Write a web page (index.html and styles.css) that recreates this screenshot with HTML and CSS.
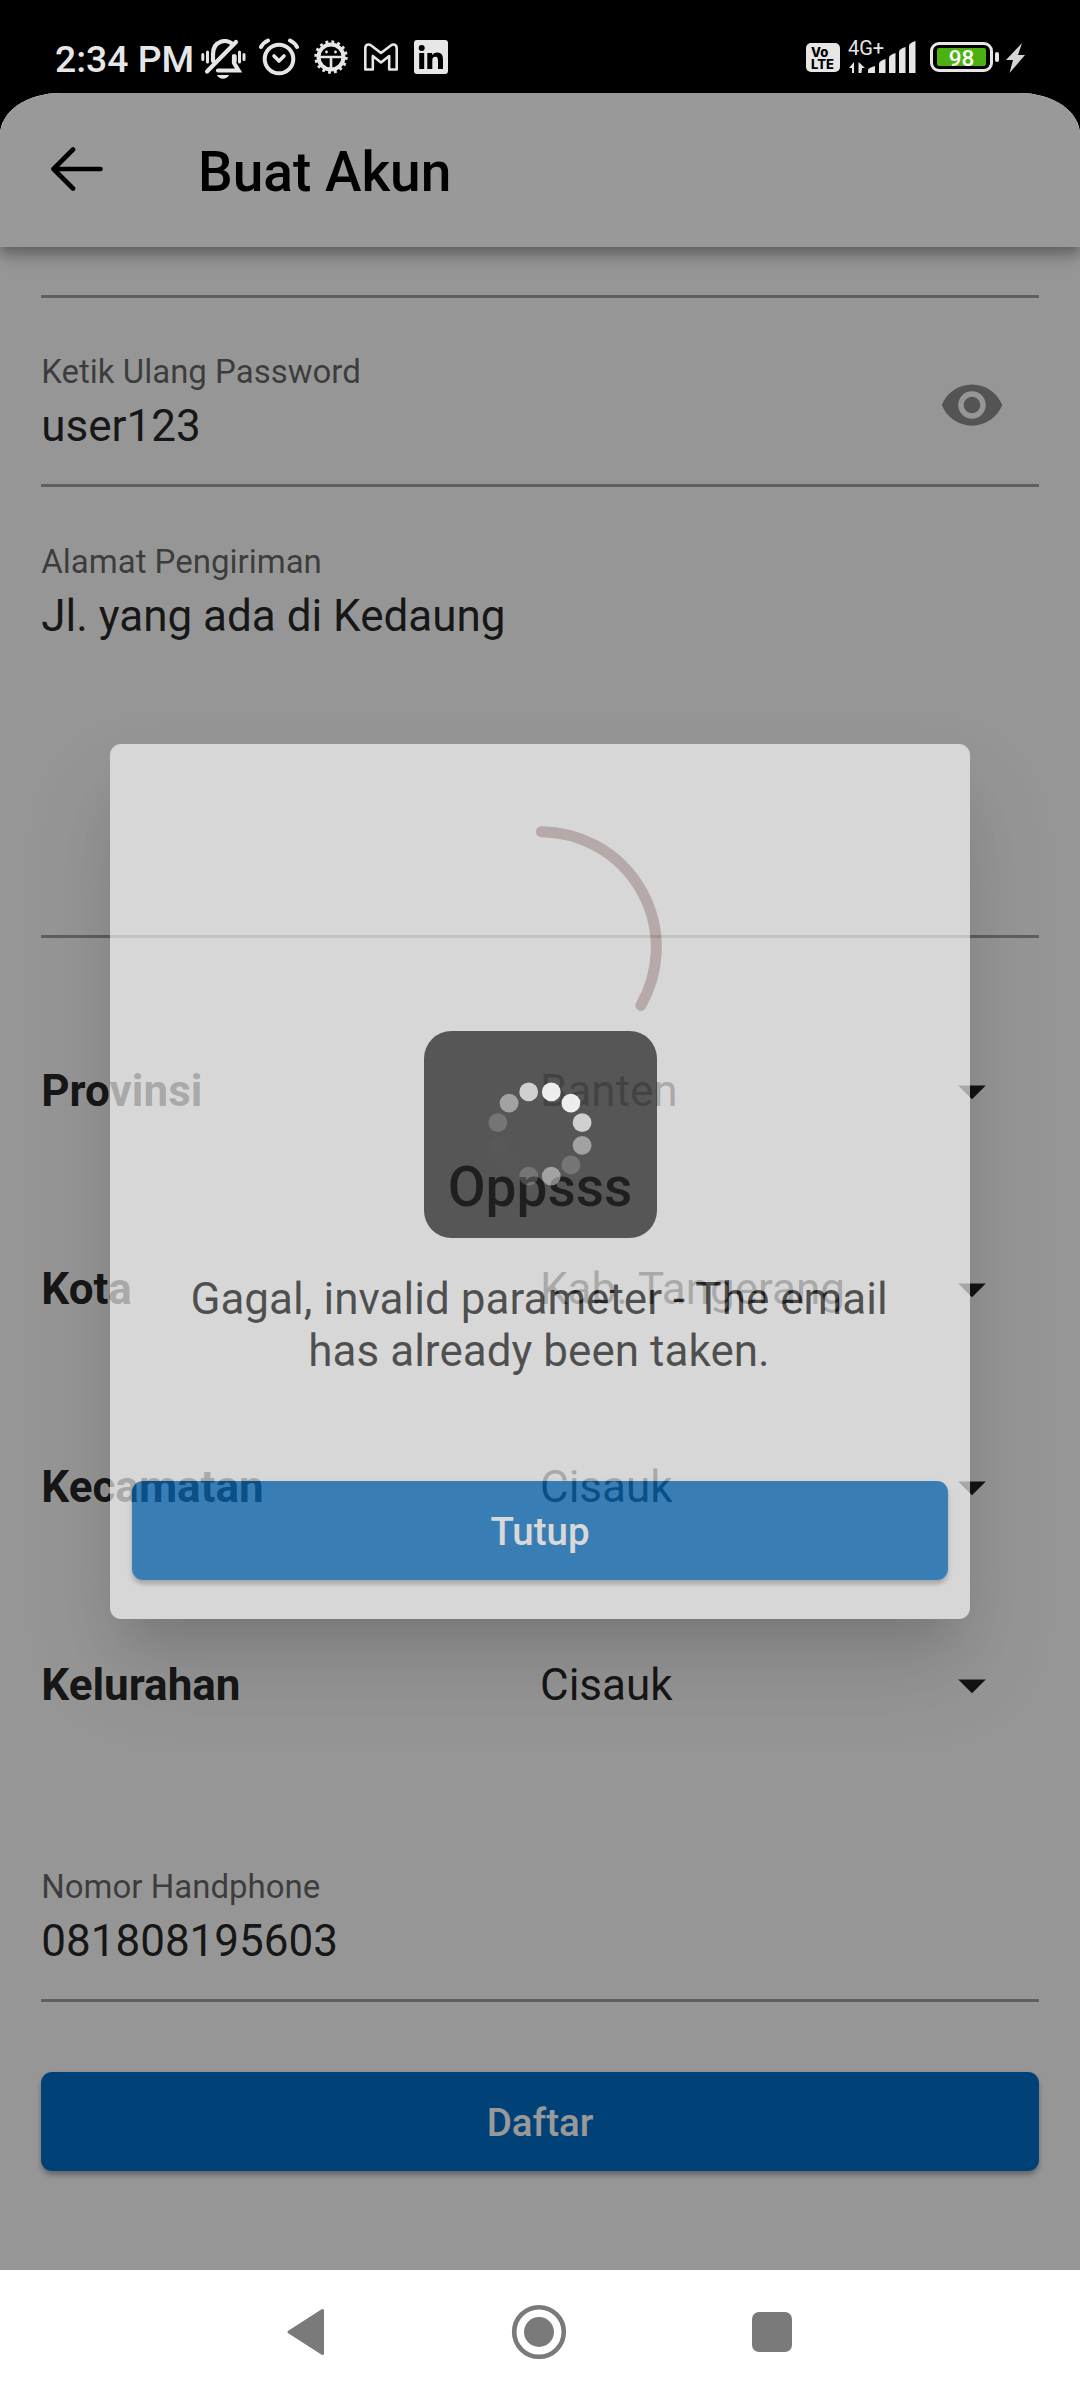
FILE: index.html
```html
<!DOCTYPE html>
<html lang="id">
<head>
<meta charset="utf-8">
<title>Buat Akun</title>
<link rel="stylesheet" href="styles.css">
</head>
<body>
<div class="screen">
  <div class="status">
    <span class="clock">2:34 PM</span>
    <div class="notifs">
      <svg class="bell" width="46" height="42" viewBox="0 0 46 42" fill="none" stroke="#e6e6e6" stroke-width="4.200" stroke-linecap="round">
        <path d="M1.800 15.500v5M6.500 13v10M43 15.500v5M38.500 13v10M34.200 17v5" stroke-width="3"/>
        <path d="M12 22v-7c0-13.500 14-16 20-9.500" />
        <path d="M33 17v7l4.500 7.500H17"/>
        <path d="M6 32.500L35 3"/>
        <path d="M16 36h12c-2 5-10 5-12 0z" fill="#e6e6e6" stroke="none"/>
      </svg>
      <svg class="alarm" width="40" height="38" viewBox="0 0 40 38" fill="none" stroke="#e6e6e6" stroke-width="4">
        <circle cx="20" cy="21" r="14.300"/>
        <path d="M2 9Q4.500 4.500 9 2.500M38 9Q35.500 4.500 31 2.500" stroke-linecap="round" stroke-width="4"/>
        <path d="M15 18l5 5 5-5" stroke-linecap="round" stroke-linejoin="round" stroke-width="3.600"/>
      </svg>
      <svg class="gear" width="34" height="36" viewBox="0 0 34 36" fill="none" stroke="#e6e6e6">
        <circle cx="17" cy="18" r="12.500" stroke-width="4"/>
        <circle cx="17" cy="18" r="15.200" stroke-width="3" stroke-dasharray="2.800 3.167"/>
        <path d="M5 18h24M17 19v11" stroke-width="2.600"/>
        <circle cx="12.500" cy="13" r="1.400" fill="#e6e6e6" stroke="none"/>
        <circle cx="21.500" cy="13" r="1.400" fill="#e6e6e6" stroke="none"/>
      </svg>
      <svg class="gmail" width="34" height="28" viewBox="0 0 34 28" fill="none" stroke="#e6e6e6" stroke-width="2.600" stroke-linejoin="round">
        <path d="M1.300 5.500C1.300 1.500 4.500 0.500 7.500 2.700L17 10l9.500-7.300C29.500 0.500 32.700 1.500 32.700 5.500V26.500H25.200V13L17 19.500 8.800 13V26.500H1.300z"/>
      </svg>
      <svg class="linkedin" width="34" height="34" viewBox="0 0 34 34">
        <rect width="34" height="34" rx="3" fill="#e6e6e6"/>
        <circle cx="7.700" cy="8" r="3" fill="#000"/>
        <path d="M5.200 13h5v16h-5zM13.300 13h4.800v2.200c1-1.700 2.800-2.600 5-2.600 4.700 0 5.900 3 5.900 7.200V29h-5v-8.200c0-2-.3-4-2.700-4s-3 2-3 4V29h-5z" fill="#000"/>
      </svg>
    </div>
    <div class="system">
      <div class="volte"><span>Vo</span><span>LTE</span></div>
      <div class="signal">
        <span class="net">4G+</span>
        <svg width="70" height="33" viewBox="0 0 70 33" fill="#e6e6e6">
          <path d="M1 27l5-6v11H4v-5zM10.500 21l6.500 6h-3l-.5 5h-3z"/>
          <path d="M20 29q0-2 7-4v7h-7zM31 23q0-3 6.500-5v14H31zM41 17q0-3 6.500-5v20H41zM51 11q0-3 6.500-5v26H51zM61 5q0-3 6.500-5v32H61z"/>
        </svg>
      </div>
      <div class="battery"><span class="level">98</span></div>
      <i class="cap"></i>
      <svg class="bolt" width="19" height="30" viewBox="0 0 19 30"><path d="M16 0L0 17h7L3.500 30 19 12h-7z" fill="#d4d4d4"/></svg>
    </div>
  </div>

  <div class="app">
    <header class="bar">
      <svg width="52" height="44" viewBox="0 0 52 44" fill="none" stroke="#000" stroke-width="4.600" stroke-linecap="round" stroke-linejoin="round"><path d="M22 2.500L2.500 22 22 41.500M3 22h46.500"/></svg>
      <h1>Buat Akun</h1>
    </header>
    <main class="form">
      <div class="field first"></div>
      <div class="field password">
        <label>Ketik Ulang Password</label>
        <div class="value">user123</div>
        <svg class="eye" width="66" height="66" viewBox="0 0 24 24"><path fill="#8c8c8c" d="M12 4.500C7 4.500 2.730 7.610 1 12c1.730 4.390 6 7.500 11 7.500s9.270-3.110 11-7.500c-1.730-4.390-6-7.500-11-7.500zM12 17c-2.760 0-5-2.240-5-5s2.240-5 5-5 5 2.240 5 5-2.240 5-5 5zm0-8c-1.660 0-3 1.340-3 3s1.340 3 3 3 3-1.340 3-3-1.340-3-3-3z"/></svg>
      </div>
      <div class="field area">
        <label>Alamat Pengiriman</label>
        <div class="value">Jl. yang ada di Kedaung</div>
      </div>
      <div class="selects">
        <div class="row"><b>Provinsi</b><span>Banten</span><svg width="66" height="66" viewBox="0 0 24 24"><path d="M7 10l5 5 5-5z"/></svg></div>
        <div class="row"><b>Kota</b><span>Kab. Tangerang</span><svg width="66" height="66" viewBox="0 0 24 24"><path d="M7 10l5 5 5-5z"/></svg></div>
        <div class="row"><b>Kecamatan</b><span>Cisauk</span><svg width="66" height="66" viewBox="0 0 24 24"><path d="M7 10l5 5 5-5z"/></svg></div>
        <div class="row"><b>Kelurahan</b><span>Cisauk</span><svg width="66" height="66" viewBox="0 0 24 24"><path d="M7 10l5 5 5-5z"/></svg></div>
      </div>
      <div class="field phone">
        <label>Nomor Handphone</label>
        <div class="value">081808195603</div>
      </div>
      <button class="btn submit">Daftar</button>
    </main>
    <div class="scrim">
      <section class="dialog">
        <svg class="anim" width="275" height="275" viewBox="-137.500 -137.500 275 275" fill="none"><path d="M1 -115.800A115.800 115.800 0 0 1 100.300 57.900" stroke="#c8b5b5" stroke-width="11" stroke-linecap="round"/></svg>
        <h2>Oppsss</h2>
        <p>Gagal, invalid parameter - The email has already been taken.</p>
        <button class="btn close">Tutup</button>
      </section>
    </div>
  </div>

  <div class="loader">
    <svg width="110" height="110" viewBox="-55 -55 110 110" fill="#fff">
      <circle cx="11.300" cy="-42.100" r="9.400" opacity=".9"/>
      <circle cx="30.900" cy="-30.900" r="9.400" opacity=".9"/>
      <circle cx="42.100" cy="-11.300" r="9.400" opacity=".72"/>
      <circle cx="42.100" cy="11.300" r="9.400" opacity=".45"/>
      <circle cx="30.900" cy="30.900" r="9.400" opacity=".19"/>
      <circle cx="11.300" cy="42.100" r="9.400" opacity=".45"/>
      <circle cx="-11.300" cy="42.100" r="9.400" opacity=".19"/>
      <circle cx="-30.900" cy="30.900" r="9.400" opacity=".01"/>
      <circle cx="-42.100" cy="11.300" r="9.400" opacity=".015"/>
      <circle cx="-42.100" cy="-11.300" r="9.400" opacity=".19"/>
      <circle cx="-30.900" cy="-30.900" r="9.400" opacity=".45"/>
      <circle cx="-11.300" cy="-42.100" r="9.400" opacity=".72"/>
    </svg>
  </div>

  <nav class="nav">
    <svg width="40" height="50" viewBox="0 0 40 50"><path d="M36.500 3.500v43L3 25z" fill="#7a7a7a" stroke="#7a7a7a" stroke-width="3" stroke-linejoin="round"/></svg>
    <svg width="56" height="56" viewBox="0 0 56 56"><circle cx="28" cy="28" r="24.800" fill="none" stroke="#7a7a7a" stroke-width="4.600"/><circle cx="28" cy="28" r="15" fill="#7a7a7a"/></svg>
    <svg width="40" height="40" viewBox="0 0 40 40"><rect width="40" height="40" rx="7" fill="#7a7a7a"/></svg>
  </nav>
</div>
</body>
</html>
```
FILE: styles.css
```css
* { box-sizing: border-box; }
body { margin: 0; font-family: Roboto, "Liberation Sans", sans-serif; background: #000; }
svg { display: block; flex: none; }
h1, h2, p { margin: 0; }
.screen { position: relative; width: 1080px; height: 2400px; display: flex; flex-direction: column; overflow: hidden; }

/* status bar */
.status { height: 93px; flex: none; display: flex; align-items: flex-start; padding: 0 55px; color: #e6e6e6; }
.clock { font-size: 37.300px; font-weight: 500; line-height: 46px; margin-top: 36px; width: 146px; white-space: nowrap; }
.notifs { display: flex; }
.bell { margin-top: 39px; }
.alarm { margin: 38px 0 0 12px; }
.gear { margin: 39px 0 0 15px; }
.gmail { margin: 43px 0 0 16px; }
.linkedin { margin: 40px 0 0 16px; }
.system { display: flex; margin-left: auto; }
.volte { width: 34px; height: 29px; margin-top: 43px; background: #e6e6e6; color: #000; border-radius: 5px; display: flex; flex-direction: column; padding: 3px 0 0 5px; font: 800 13px/12px Inter, Roboto, sans-serif; }
.signal { width: 70px; margin: 39px 0 0 8px; height: 34px; position: relative; }
.signal svg { position: absolute; left: 0; top: 2px; }
.net { position: absolute; left: 0; top: -2px; font-size: 20px; line-height: 22px; }
.battery { width: 63px; height: 30px; margin: 42px 0 0 12px; border: 3px solid #e6e6e6; border-radius: 9px; padding: 3px 4px; }
.level { display: block; height: 18px; background: #4db012; color: #fff; font-size: 22.500px; line-height: 20px; font-weight: 500; text-align: center; border-radius: 2px; }
.cap { width: 4px; height: 10px; background: #e6e6e6; border-radius: 2px; margin: 52px 0 0 2px; }
.bolt { margin: 43px 0 0 7px; }

/* page */
.app { position: relative; flex: 1; display: flex; flex-direction: column; background: #fafafa; border-radius: 60px 60px 0 0 / 42px 42px 0 0; overflow: hidden; }
.bar { height: 154px; flex: none; background: #fff; display: flex; align-items: center; padding: 0 51px; gap: 95px; box-shadow: 0 5px 11px rgba(0,0,0,.2), 0 11px 14px rgba(0,0,0,.14), 0 3px 27px rgba(0,0,0,.1); z-index: 1; }
.bar svg { margin-top: -2px; }
.bar h1 { font-size: 55px; font-weight: 500; line-height: 64px; margin-top: 4px; }
.form { flex: 1; padding: 0 41.250px; color: rgba(0,0,0,.87); }
.field { height: 190px; border-bottom: 3px solid #9e9e9e; position: relative; padding-top: 55px; }
.field.first { height: 51px; padding: 0; }
.password { height: 189px; padding-top: 54px; }
.field label { display: block; font-size: 33px; line-height: 39px; color: rgba(0,0,0,.6); }
.value { font-size: 44px; line-height: 52px; margin-top: 9px; }
.eye { position: absolute; right: 33.500px; top: 74px; }
.area { height: 451px; }
.selects { padding-top: 54px; }
.row { height: 198px; display: flex; align-items: center; font-size: 44px; line-height: 52px; }
.row b { width: 498.750px; }
.row span { flex: 1; }
.row svg { margin-right: 33.500px; fill: rgba(0,0,0,.87); }
.phone { margin-top: 28px; }
.btn { display: block; width: 100%; height: 99px; border: 0; border-radius: 11px; background: #006fc6; color: #fff; font: 500 38.500px/45px Roboto, sans-serif; box-shadow: 0 5px 5px -1px rgba(0,0,0,.2), 0 3px 6px rgba(0,0,0,.16); }
.submit { margin-top: 70px; padding: 2px 0 0; }

/* dialog above the dimmed page */
.scrim { position: absolute; inset: 0; z-index: 2; background: rgba(0,0,0,.4); display: flex; align-items: center; justify-content: center; }
.dialog { width: 860px; height: 875px; background: #fdfdfd; border-radius: 11px; opacity: .634; padding: 66px 22px 39px; display: flex; flex-direction: column; align-items: center; box-shadow: 0 30px 41px -19px rgba(0,0,0,.18), 0 50px 90px -4px rgba(0,0,0,.2); }
.dialog h2 { font-size: 55px; font-weight: 500; line-height: 64px; color: rgba(0,0,0,.85); margin-top: 70px; }
.dialog p { width: 720px; font-size: 44px; line-height: 51.500px; text-align: center; color: rgba(0,0,0,.85); margin: 55px 2px 0 0; letter-spacing: .03px; }
.close { margin-top: auto; padding: 2px 0 0; background: #0570c7; }

/* progress indicator */
.loader { position: absolute; left: 423.500px; top: 1031px; width: 233.500px; height: 206.500px; border-radius: 27.500px; background: rgba(0,0,0,.6); display: flex; align-items: center; justify-content: center; z-index: 3; }

/* system navigation */
.nav { height: 130px; flex: none; background: #fff; display: grid; grid-template-columns: 1fr 1fr 1fr; width: 100%; padding: 0 191px 6px 189px; align-items: center; justify-items: center; }
```
